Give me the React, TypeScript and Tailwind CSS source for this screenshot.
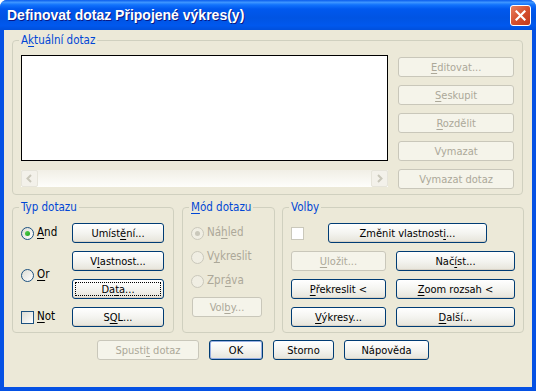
import type { ReactNode } from "react";

function U({ children }: { children: ReactNode }) {
  return <span className="underline decoration-1 underline-offset-[2px]">{children}</span>;
}

function Btn({
  children,
  disabled,
  focused,
  isDefault,
  className = "",
}: {
  children: ReactNode;
  disabled?: boolean;
  focused?: boolean;
  isDefault?: boolean;
  className?: string;
}) {
  return (
    <button
      disabled={disabled}
      className={`h-5 shrink-0 rounded-[3px] border p-[2px] flex text-[11px] leading-none ${
        disabled
          ? "border-[#C9C7BA] bg-[#F5F4EA] text-[#ACA899]"
          : `border-[#003C74] bg-gradient-to-b from-white via-[#F4F4F0] to-[#E6E4DA] text-black ${
              isDefault ? "shadow-[inset_0_0_0_1px_#97AEE2]" : "shadow-[inset_0_-1px_0_#D8D2C6]"
            }`
      } ${className}`}
    >
      <span
        className={`flex-1 flex items-center justify-center border border-dotted ${
          focused ? "border-black" : "border-transparent"
        }`}
      >
        <span className="whitespace-pre">{children}</span>
      </span>
    </button>
  );
}

function Radio({ checked, disabled, label }: { checked?: boolean; disabled?: boolean; label: ReactNode }) {
  return (
    <div className={`flex items-center gap-[3px] text-[11.5px] ${disabled ? "text-[#ACA899]" : "text-black"}`}>
      <span
        className={`w-[13px] h-[13px] rounded-full border flex items-center justify-center ${
          disabled ? "border-[#CAC8BB] bg-[#F0EEE3]" : "border-[#1C5180] bg-gradient-to-br from-[#DCDCD4] to-white"
        }`}
      >
        {checked && (
          <span
            className={`w-[5px] h-[5px] rounded-full ${
              disabled ? "bg-[#CAC8BB]" : "bg-gradient-to-br from-[#55D051] to-[#18A418]"
            }`}
          />
        )}
      </span>
      <span>{label}</span>
    </div>
  );
}

function Check({ disabled, label }: { disabled?: boolean; label?: ReactNode }) {
  return (
    <div className="flex items-center gap-[3px] text-[11.5px] text-black">
      <span
        className={`w-[13px] h-[13px] border ${
          disabled ? "border-[#CAC8BB] bg-white" : "border-[#1C5180] bg-gradient-to-br from-[#DCDCD4] to-white"
        }`}
      />
      {label && <span>{label}</span>}
    </div>
  );
}

function Group({ title, className = "", children }: { title: ReactNode; className?: string; children: ReactNode }) {
  return (
    <fieldset className={`border border-[#D0D0BF] rounded-[4px] min-w-0 ${className}`}>
      <legend className="ml-[6px] px-[2px] text-[11.5px] leading-[14px] text-[#0046D5]">{title}</legend>
      {children}
    </fieldset>
  );
}

function ScrollArrow({ dir }: { dir: "left" | "right" }) {
  return (
    <span className="w-[17px] h-[17px] rounded-[2px] border border-[#E6E4DA] bg-[#F3F1EA] flex items-center justify-center">
      <svg width="9" height="9" viewBox="0 0 9 9">
        <path
          d={dir === "left" ? "M6 1 L2.5 4.5 L6 8" : "M3 1 L6.5 4.5 L3 8"}
          fill="none"
          stroke="#C9C7BA"
          strokeWidth="2"
        />
      </svg>
    </span>
  );
}

export default function App() {
  return (
    <div className="w-[536px] h-[391px] bg-white font-['DejaVu_Sans_Condensed','Liberation_Sans',Arial,sans-serif]">
      <div className="w-full h-full flex flex-col rounded-t-[7px] overflow-hidden bg-[#0551E4]">
        {/* Title bar */}
        <div className="h-[30px] shrink-0 flex items-center justify-between pl-[7px] pr-[5px] bg-[linear-gradient(to_bottom,#0A5CEC_0%,#3D95FF_8%,#1273FC_16%,#0058EE_30%,#0054E3_60%,#0058EE_85%,#0050DC_100%)]">
          <span className="text-white font-bold text-[14px] font-['Liberation_Sans',Arial,sans-serif] [text-shadow:1px_1px_#0A1883]">
            Definovat dotaz Připojené výkres(y)
          </span>
          <span className="w-[21px] h-[21px] rounded-[3px] border border-white bg-gradient-to-br from-[#E8805E] via-[#D5502E] to-[#C2391B] flex items-center justify-center">
            <svg width="11" height="11" viewBox="0 0 11 11">
              <path d="M1.5 1.5 L9.5 9.5 M9.5 1.5 L1.5 9.5" stroke="white" strokeWidth="2.2" strokeLinecap="square" />
            </svg>
          </span>
        </div>

        {/* Body */}
        <div className="flex-1 mx-[4px] mb-[4px] bg-[#ECE9D8] px-[8px] flex flex-col">
          <Group
            className="mt-[3px] w-[511px]"
            title={
              <>
                A<U>k</U>tuální dotaz
              </>
            }
          >
            <div className="flex gap-[10px] px-[8px] pt-[8px] pb-[5px]">
              <div className="w-[368px] flex flex-col gap-[9px]">
                <div className="h-[106px] border border-black bg-white" />
                <div className="h-[17px] flex justify-between bg-gradient-to-b from-[#F1EFE6] to-[#FEFEFB]">
                  <ScrollArrow dir="left" />
                  <ScrollArrow dir="right" />
                </div>
              </div>
              <div className="w-[116px] pt-[2px] flex flex-col gap-2">
                <Btn disabled>
                  <U>E</U>ditovat...
                </Btn>
                <Btn disabled>
                  <U>S</U>eskupit
                </Btn>
                <Btn disabled>
                  <U>R</U>ozdělit
                </Btn>
                <Btn disabled>Vymazat</Btn>
                <Btn disabled>Vymazat dotaz</Btn>
              </div>
            </div>
          </Group>

          <div className="flex mt-[5px]">
            <Group className="w-[162px]" title="Typ dotazu">
              <div className="grid grid-cols-[51px_92px] grid-rows-[20px_20px_20px_20px] gap-y-2 pl-[8px] pt-[9px] pb-[5px]">
                <div className="flex items-center">
                  <Radio
                    checked
                    label={
                      <>
                        <U>A</U>nd
                      </>
                    }
                  />
                </div>
                <Btn>
                  Umíst<U>ě</U>ní...
                </Btn>
                <div className="row-span-2 flex items-center">
                  <Radio
                    label={
                      <>
                        <U>O</U>r
                      </>
                    }
                  />
                </div>
                <Btn>
                  V<U>l</U>astnost...
                </Btn>
                <Btn focused>
                  Da<U>t</U>a...
                </Btn>
                <div className="flex items-center">
                  <Check
                    label={
                      <>
                        <U>N</U>ot
                      </>
                    }
                  />
                </div>
                <Btn>
                  S<U>Q</U>L...
                </Btn>
              </div>
            </Group>

            <Group
              className="ml-[8px] w-[93px]"
              title={
                <>
                  <U>M</U>ód dotazu
                </>
              }
            >
              <div className="flex flex-col pl-[8px] pt-[7px] pb-[5px]">
                <div className="h-6 flex items-center">
                  <Radio
                    disabled
                    checked
                    label={
                      <>
                        Ná<U>h</U>led
                      </>
                    }
                  />
                </div>
                <div className="h-6 flex items-center">
                  <Radio
                    disabled
                    label={
                      <>
                        V<U>y</U>kreslit
                      </>
                    }
                  />
                </div>
                <div className="h-6 flex items-center">
                  <Radio
                    disabled
                    label={
                      <>
                        Zpr<U>á</U>va
                      </>
                    }
                  />
                </div>
                <Btn disabled className="mt-[4px] ml-[1px] w-[70px]">
                  Vol<U>b</U>y...
                </Btn>
              </div>
            </Group>

            <Group className="ml-[7px] flex-1" title="Volby">
              <div className="grid grid-cols-[95px_119px] gap-x-[10px] gap-y-2 pl-[8px] pt-[9px] pb-[5px]">
                <div className="col-span-2 flex items-center gap-[24px]">
                  <Check disabled />
                  <Btn className="w-[159px]">
                    Změnit vlastnost<U>i</U>...
                  </Btn>
                </div>
                <Btn disabled>
                  <U>U</U>ložit...
                </Btn>
                <Btn>
                  Nač<U>í</U>st...
                </Btn>
                <Btn>
                  <U>P</U>řekreslit &lt;
                </Btn>
                <Btn>
                  <U>Z</U>oom rozsah &lt;
                </Btn>
                <Btn>
                  <U>V</U>ýkresy...
                </Btn>
                <Btn>
                  <U>D</U>alší...
                </Btn>
              </div>
            </Group>
          </div>

          <div className="flex gap-[10px] mt-[7px] pl-[85px]">
            <Btn disabled className="w-[102px]">
              Spusti<U>t</U> dotaz
            </Btn>
            <Btn isDefault className="w-[54px]">
              OK
            </Btn>
            <Btn className="w-[61px]">Storno</Btn>
            <Btn className="w-[85px]">Nápověda</Btn>
          </div>
        </div>
      </div>
    </div>
  );
}
